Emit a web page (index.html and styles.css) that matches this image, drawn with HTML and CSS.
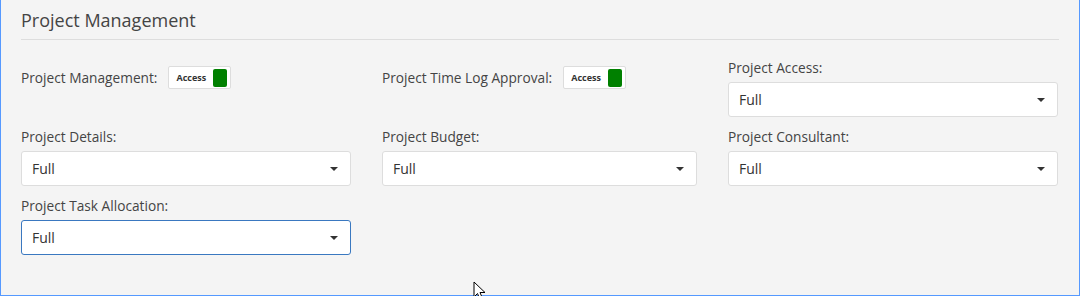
FILE: index.html
```html
<!DOCTYPE html>
<html lang="en">
<head>
    <meta charset="UTF-8">
    <meta name="viewport" content="width=device-width, initial-scale=1.0">
    <title>Project Management</title>
    <link rel="stylesheet" href="styles.css">
</head>
<body>
    <div class="panel">
        <h2 class="panel-title">Project Management</h2>

        <div class="fields">
            <div class="field toggle-field">
                <span class="label">Project Management:</span>
                <span class="toggle"><span>Access</span><i class="knob"></i></span>
            </div>
            <div class="field toggle-field">
                <span class="label">Project Time Log Approval:</span>
                <span class="toggle"><span>Access</span><i class="knob"></i></span>
            </div>
            <div class="field">
                <label class="label">Project Access:</label>
                <div class="select">Full<i class="caret"></i></div>
            </div>

            <div class="field">
                <label class="label">Project Details:</label>
                <div class="select">Full<i class="caret"></i></div>
            </div>
            <div class="field">
                <label class="label">Project Budget:</label>
                <div class="select">Full<i class="caret"></i></div>
            </div>
            <div class="field">
                <label class="label">Project Consultant:</label>
                <div class="select">Full<i class="caret"></i></div>
            </div>

            <div class="field">
                <label class="label">Project Task Allocation:</label>
                <div class="select focused">Full<i class="caret"></i></div>
            </div>
        </div>

        <svg class="cursor" width="14" height="21" viewBox="0 0 14 21">
            <path d="M1 1 L1 16 L4.5 12.5 L7 18.5 L9.5 17.5 L7 11.5 L12 11.5 Z" fill="#fff" stroke="#000" stroke-width="1"/>
        </svg>
    </div>
</body>
</html>
```

FILE: styles.css
```css
body { margin: 0; background: #fff; font-family: "Open Sans", "Noto Sans", sans-serif; color: #444; }
.panel { position: relative; width: 1038px; background: #f4f4f4; border: 1px solid #5599ff; border-top: none; padding: 0 20px 40px 20px; }
.panel-title { margin: 0; padding: 9px 0 7px; font-size: 18px; font-weight: normal; line-height: 23px; border-bottom: 1px solid #ddd; }
.fields { display: grid; grid-template-columns: 330px 315px 330px; column-gap: 31px; row-gap: 11px; padding-top: 19px; }
.field { display: flex; flex-direction: column; }
.label { font-size: 13.7px; line-height: 18px; margin-bottom: 5px; color: #444; }
.toggle-field { flex-direction: row; align-items: center; gap: 11px; padding-top: 7px; align-self: start; }
.toggle-field .label { margin: 0; }
.toggle { display: inline-flex; align-items: center; height: 21px; padding: 0 3px 0 7px; background: #fff; border: 1px solid #ddd; border-radius: 2px; font-size: 9px; font-weight: bold; color: #333; }
.knob { display: block; width: 14px; height: 18px; margin-left: 7px; background: #008000; border-radius: 2px; }
.select { position: relative; height: 33px; line-height: 33px; padding: 0 10px; background: #fff; border: 1px solid #ddd; border-radius: 3px; font-size: 14px; color: #333; }
.select.focused { border-color: #3a78c0; }
.caret { position: absolute; right: 12px; top: 15px; border-left: 4px solid transparent; border-right: 4px solid transparent; border-top: 4px solid #333; }
.cursor { position: absolute; left: 472px; top: 281px; }
```
